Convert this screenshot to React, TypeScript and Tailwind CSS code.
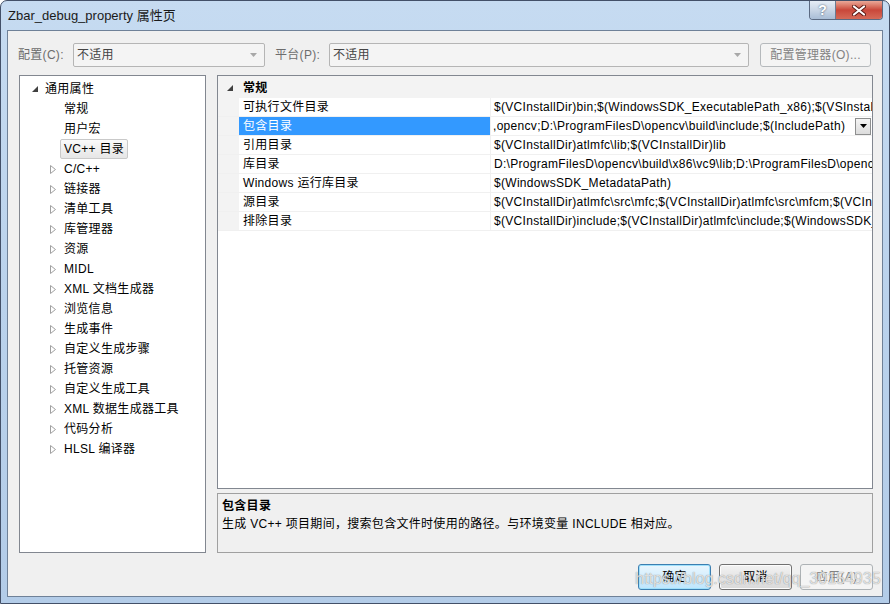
import React from "react";

// tree rows of the left pane
const treeItems: { label: string; level: number; expander: "open" | "closed" | "none"; selected?: boolean }[] = [
  { label: "通用属性", level: 0, expander: "open" },
  { label: "常规", level: 1, expander: "none" },
  { label: "用户宏", level: 1, expander: "none" },
  { label: "VC++ 目录", level: 1, expander: "none", selected: true },
  { label: "C/C++", level: 1, expander: "closed" },
  { label: "链接器", level: 1, expander: "closed" },
  { label: "清单工具", level: 1, expander: "closed" },
  { label: "库管理器", level: 1, expander: "closed" },
  { label: "资源", level: 1, expander: "closed" },
  { label: "MIDL", level: 1, expander: "closed" },
  { label: "XML 文档生成器", level: 1, expander: "closed" },
  { label: "浏览信息", level: 1, expander: "closed" },
  { label: "生成事件", level: 1, expander: "closed" },
  { label: "自定义生成步骤", level: 1, expander: "closed" },
  { label: "托管资源", level: 1, expander: "closed" },
  { label: "自定义生成工具", level: 1, expander: "closed" },
  { label: "XML 数据生成器工具", level: 1, expander: "closed" },
  { label: "代码分析", level: 1, expander: "closed" },
  { label: "HLSL 编译器", level: 1, expander: "closed" },
];

const props = [
  { name: "可执行文件目录", value: "$(VCInstallDir)bin;$(WindowsSDK_ExecutablePath_x86);$(VSInstallDir)Common7\\Tools\\bin;$(VSInstallDir)Common7\\tools" },
  { name: "包含目录", value: ",opencv;D:\\ProgramFilesD\\opencv\\build\\include;$(IncludePath)", selected: true },
  { name: "引用目录", value: "$(VCInstallDir)atlmfc\\lib;$(VCInstallDir)lib" },
  { name: "库目录", value: "D:\\ProgramFilesD\\opencv\\build\\x86\\vc9\\lib;D:\\ProgramFilesD\\opencv\\build\\x86\\vc10\\lib" },
  { name: "Windows 运行库目录", value: "$(WindowsSDK_MetadataPath)" },
  { name: "源目录", value: "$(VCInstallDir)atlmfc\\src\\mfc;$(VCInstallDir)atlmfc\\src\\mfcm;$(VCInstallDir)atlmfc\\src\\atl" },
  { name: "排除目录", value: "$(VCInstallDir)include;$(VCInstallDir)atlmfc\\include;$(WindowsSDK_IncludePath);$(MSBuild)" },
];

function OpenTri() {
  return (
    <svg width="6" height="6" viewBox="0 0 6 6">
      <polygon points="6,0 6,6 0,6" fill="#404040" />
    </svg>
  );
}

function ClosedTri() {
  return (
    <svg width="6" height="9" viewBox="0 0 6 9">
      <polygon points="0.5,0.5 5.5,4.5 0.5,8.5" fill="none" stroke="#a0a0a0" strokeWidth="1" />
    </svg>
  );
}

function ComboArrow() {
  return (
    <svg width="7" height="4" viewBox="0 0 7 4">
      <polygon points="0,0 7,0 3.5,4" fill="#a8a8a8" />
    </svg>
  );
}

function Combo({ width }: { width: string }) {
  return (
    <div className={`${width} h-[24px] flex items-center justify-between border border-[#b5b5b5] rounded-[2px] bg-[#f4f4f4] pl-[3px] pr-[7px] text-[#444]`}>
      <span>不适用</span>
      <ComboArrow />
    </div>
  );
}

export default function App() {
  return (
    <div className="w-[890px] h-[604px] flex flex-col border border-[#435068] rounded-t-[7px] bg-gradient-to-b from-[#c6dbf1] via-[#bad2ec] to-[#b3cce8] font-['Liberation_Sans','Noto_Sans_CJK_SC',sans-serif] text-[12px] text-black overflow-hidden">
      {/* title bar */}
      <div className="h-[29px] flex items-start justify-between">
        <div className="self-center pl-[7px] text-[13px] text-[#1a1a1a]">Zbar_debug_property 属性页</div>
        <div className="mr-[6px] flex h-[19px] border border-t-0 border-[#5b6a82] rounded-b-[4px] overflow-hidden">
          <div className="w-[26px] flex items-center justify-center bg-gradient-to-b from-[#e6edf6] via-[#c9d6e6] to-[#a9bdd6] border-r border-[#6b7b92] text-[14px] font-bold text-white [text-shadow:0_0_2px_#3a4a60]">
            ?
          </div>
          <div className="w-[46px] flex items-center justify-center bg-gradient-to-b from-[#e9a898] via-[#c9473a] to-[#d56a58]">
            <svg width="14" height="11" viewBox="0 0 14 11">
              <path d="M2 1.5 L12 9.5 M12 1.5 L2 9.5" stroke="#5a1a14" strokeWidth="4" strokeLinecap="round" />
              <path d="M2 1.5 L12 9.5 M12 1.5 L2 9.5" stroke="#ffffff" strokeWidth="2.2" strokeLinecap="round" />
            </svg>
          </div>
        </div>
      </div>

      {/* client area */}
      <div className="relative flex-1 mx-[6px] mb-[6px] border border-[#6f8198] bg-[#f0f0f0] pt-[12px] pl-[11px] pr-[9px] pb-[6px] flex flex-col tracking-[0.3px]">
        {/* configuration row */}
        <div className="h-[24px] flex items-center">
          <span className="w-[55px] text-[#6d6d6d] -ml-px">配置(C):</span>
          <Combo width="w-[192px]" />
          <span className="w-[64px] pl-[10px] text-[#6d6d6d]">平台(P):</span>
          <Combo width="w-[420px]" />
          <div className="ml-[11px] w-[111px] h-[24px] flex items-center justify-center border border-[#b5b9bc] rounded-[3px] bg-[#f4f4f4] text-[#838383]">
            配置管理器(O)...
          </div>
        </div>

        {/* main panes */}
        <div className="mt-[8px] h-[478px] flex gap-[11px]">
          <div className="w-[187px] border border-[#828790] bg-white pt-[3px]">
            {treeItems.map((it) => (
              <div key={it.label} className={`h-[20px] flex items-center ${it.level === 0 ? "pl-[11px]" : "pl-[29px]"}`}>
                <div className={`${it.level === 0 ? "w-[10px]" : "w-[11px]"} flex items-center pl-px`}>
                  {it.expander === "open" && <OpenTri />}
                  {it.expander === "closed" && <ClosedTri />}
                </div>
                <span
                  className={`h-[20px] flex items-center px-[3px] border rounded-[2px] whitespace-nowrap ${
                    it.selected ? "border-[#c9c9c9] bg-gradient-to-b from-[#fafafa] to-[#e6e6e6]" : "border-transparent"
                  }`}
                >
                  {it.label}
                </span>
              </div>
            ))}
          </div>

          <div className="flex-1 flex flex-col gap-[4px] min-w-0">
            {/* property grid */}
            <div className="flex-1 border border-[#828790] bg-white overflow-hidden">
              <div className="h-[22px] pt-[2px] flex items-center bg-[#f3f3f3]">
                <div className="w-[21px] flex justify-center pl-[3px]">
                  <OpenTri />
                </div>
                <span className="pl-[4px] font-bold">常规</span>
              </div>
              {props.map((p) => (
                <div key={p.name} className="h-[19px] flex border-b border-[#f0f0f0]">
                  <div className="w-[21px] shrink-0 bg-[#f3f3f3]" />
                  <div
                    className={`w-[252px] shrink-0 flex items-center pl-[4px] border-r border-[#f0f0f0] whitespace-nowrap ${
                      p.selected ? "bg-[#3399ff] text-white" : ""
                    }`}
                  >
                    {p.name}
                  </div>
                  {p.selected ? (
                    <div className="flex-1 min-w-0 flex items-center pl-[2px] pr-[1px]">
                      <div className="flex-1 min-w-0 overflow-hidden whitespace-nowrap pr-[2px]">{p.value}</div>
                      <div className="w-[16px] h-[17px] shrink-0 flex items-center justify-center border border-[#8e8f8f] bg-gradient-to-b from-[#f5f5f5] to-[#dcdcdc]">
                        <svg width="7" height="4" viewBox="0 0 7 4">
                          <polygon points="0,0 7,0 3.5,4" fill="#000" />
                        </svg>
                      </div>
                    </div>
                  ) : (
                    <div className="flex-1 min-w-0 flex items-center pl-[3px] whitespace-nowrap overflow-hidden">{p.value}</div>
                  )}
                </div>
              ))}
            </div>

            {/* description */}
            <div className="h-[60px] border border-[#a0a0a0] bg-[#f0f0f0] px-[4px] pt-[3px]">
              <div className="font-bold leading-[18px]">包含目录</div>
              <div className="leading-[18px]">生成 VC++ 项目期间，搜索包含文件时使用的路径。与环境变量 INCLUDE 相对应。</div>
            </div>
          </div>
        </div>

        {/* dialog buttons */}
        <div className="mt-[11px] h-[26px] flex justify-end gap-[8px]">
          <div className="w-[73px] h-[26px] flex items-center justify-center rounded-[3px] border border-[#3c7fb1] bg-gradient-to-b from-[#eaf6fd] to-[#bee6fd] shadow-[inset_0_0_0_1px_#9fe0fb]">
            确定
          </div>
          <div className="w-[73px] h-[26px] flex items-center justify-center rounded-[3px] border border-[#707070] bg-gradient-to-b from-[#f2f2f2] to-[#d9d9d9] shadow-[inset_0_0_0_1px_#fcfcfc]">
            取消
          </div>
          <div className="w-[73px] h-[26px] flex items-center justify-center rounded-[3px] border border-[#adb2b5] bg-[#f4f4f4] text-[#838383]">
            应用(A)
          </div>
        </div>

        {/* watermark over the buttons */}
        <div className="absolute left-[627px] top-[536px] text-[16px] tracking-normal text-white/75 [text-shadow:0_0_1px_#6f6f6f] whitespace-nowrap pointer-events-none">
          https://blog.csdn.net/qq_30154935
        </div>
      </div>
    </div>
  );
}
